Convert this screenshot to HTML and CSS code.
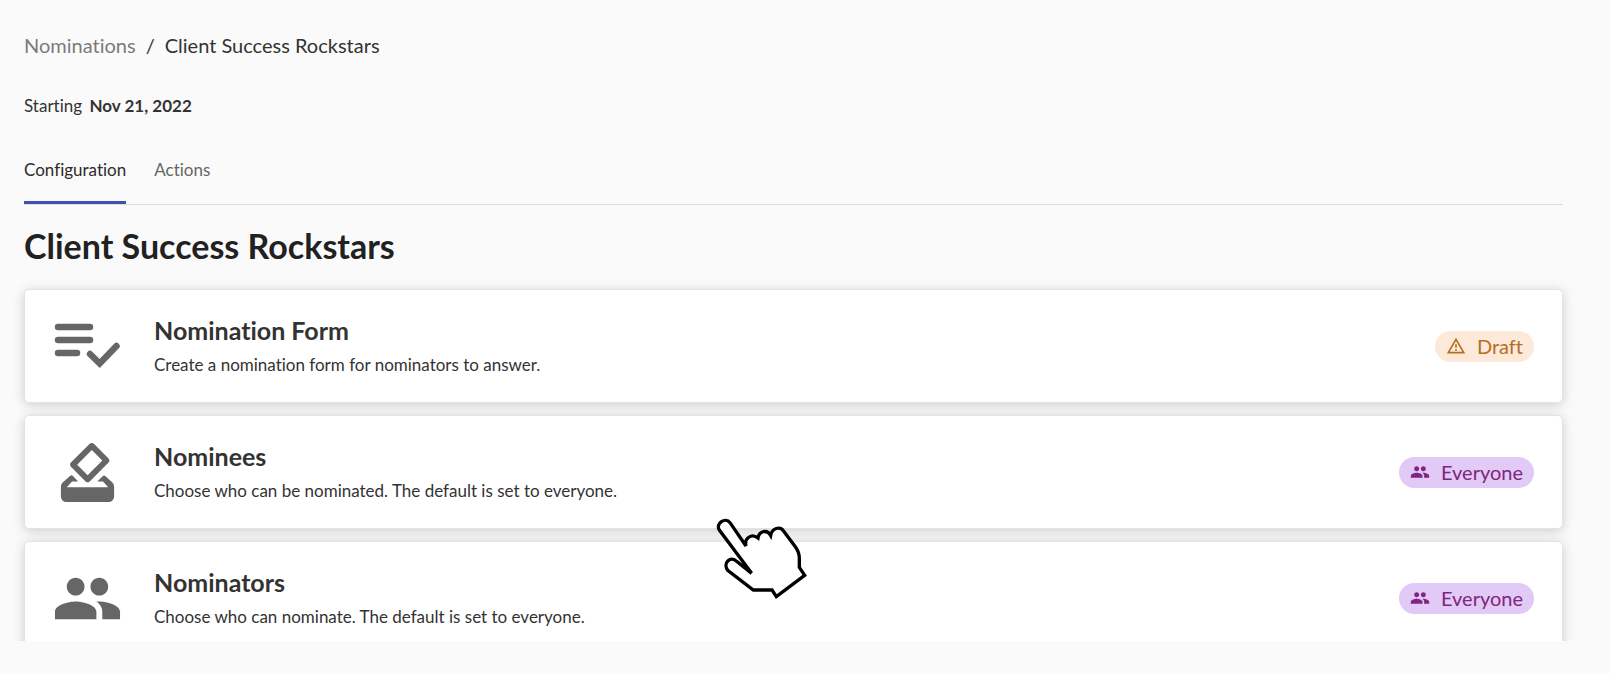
FILE: index.html
```
<!DOCTYPE html>
<html lang="en">
<head>
  <meta charset="UTF-8" />
  <meta name="viewport" content="width=device-width, initial-scale=1.0"/>
  <title>Client Success Rockstars - Nominations</title>
  <link rel="stylesheet" href="styles.css">
</head>
<body>

  <!-- shared icons -->
  <svg class="sprite" aria-hidden="true">
    <symbol id="icon-people" viewBox="0 0 24 24">
      <path d="M16 11c1.66 0 2.99-1.34 2.99-3S17.66 5 16 5c-1.66 0-3 1.34-3 3s1.34 3 3 3zm-8 0c1.66 0 2.99-1.34 2.99-3S9.66 5 8 5C6.34 5 5 6.34 5 8s1.34 3 3 3zm0 2c-2.33 0-7 1.17-7 3.5V19h14v-2.5c0-2.33-4.67-3.5-7-3.5zm8 0c-.29 0-.62.02-.97.05 1.16.84 1.97 1.97 1.97 3.45V19h6v-2.5c0-2.33-4.67-3.5-7-3.5z"/>
    </symbol>
  </svg>

  <div class="page">
    <header>
      <nav class="breadcrumb" aria-label="Breadcrumb">
        <a href="#nominations">Nominations</a>
        <span>/</span>
        <span>Client Success Rockstars</span>
      </nav>
      <p class="starting">Starting <strong>Nov 21, 2022</strong></p>
      <nav class="tabs">
        <a href="#configuration" class="active">Configuration</a>
        <a href="#actions">Actions</a>
      </nav>
    </header>

    <main>
      <h1>Client Success Rockstars</h1>

      <div class="card-list">
        <a class="card" href="#nomination-form">
          <svg class="card-icon" viewBox="0 0 71 71" aria-hidden="true">
            <path class="line" d="M6 16h32M6 29h32M6 42h19M38 43l9.7 9.5L64.5 35"/>
          </svg>
          <div class="card-text">
            <h2>Nomination Form</h2>
            <p>Create a nomination form for nominators to answer.</p>
          </div>
          <span class="badge badge-draft">
            <svg viewBox="0 0 24 24" aria-hidden="true">
              <path d="M12 5.99L19.53 19H4.47L12 5.99M12 2L1 21h22L12 2zm1 14h-2v2h2v-2zm0-6h-2v4h2v-4z"/>
            </svg>
            Draft
          </span>
        </a>

        <a class="card" href="#nominees">
          <svg class="card-icon" viewBox="0 0 24 24" aria-hidden="true">
            <path d="M17.3 13.1L15.3 15h1.93L19 17H5l1.78-2h2.05L7.1 13.2q-.5-.5-1 0L3.6 15.4q-.6.6-.6 1.4V20c0 1.1.89 2 1.99 2H19c1.1 0 2-.89 2-2v-3.2q0-.8-.6-1.4L18 13.2q-.35-.35-.7-.1zM17 7.95l-4.95 4.95-3.54-3.54 4.95-4.95L17 7.95zm-4.24-5.66L6.39 8.66c-.39.39-.39 1.02 0 1.41l4.95 4.95c.39.39 1.02.39 1.41 0l6.36-6.36c.39-.39.39-1.02 0-1.41L14.16 2.3c-.38-.4-1.01-.4-1.4-.01z"/>
          </svg>
          <div class="card-text">
            <h2>Nominees</h2>
            <p>Choose who can be nominated. The default is set to everyone.</p>
          </div>
          <span class="badge badge-everyone">
            <svg aria-hidden="true"><use href="#icon-people"/></svg>
            Everyone
          </span>
        </a>

        <a class="card" href="#nominators">
          <svg class="card-icon" aria-hidden="true"><use href="#icon-people"/></svg>
          <div class="card-text">
            <h2>Nominators</h2>
            <p>Choose who can nominate. The default is set to everyone.</p>
          </div>
          <span class="badge badge-everyone">
            <svg aria-hidden="true"><use href="#icon-people"/></svg>
            Everyone
          </span>
        </a>
      </div>
    </main>
  </div>

  <!-- hand pointer -->
  <svg class="pointer" viewBox="42 36 288 258" aria-hidden="true">
    <path d="M155 208L58 78C46 58 76 38 90 56L138 126C132 104 154 86 174 102C178 80 202 76 212 94C216 72 240 66 250 80L286 128Q299 146 298 166V190L314 214L229 278L216 258H160L84 200C66 178 92 154 110 172L155 208"/>
  </svg>

</body>
</html>
```

FILE: styles.css
```
* {
  margin: 0;
  padding: 0;
  box-sizing: border-box;
}

body {
  font-family: Lato, sans-serif;
  font-variant-ligatures: none;
  background-color: #fafafa;
  color: #333;
  line-height: 24px;
}

a {
  color: inherit;
  text-decoration: none;
}

.sprite {
  display: none;
}

.page {
  height: calc(100vh - 33px);
  margin: 0 34px 0 10px;
  padding: 33px 13px 0 14px;
  overflow: hidden;
}

.breadcrumb {
  display: flex;
  gap: 10px;
  font-size: 20px;
}

.breadcrumb a {
  color: #7a7a7a;
}

.starting {
  margin-top: 37px;
  font-size: 17px;
}

.starting strong {
  margin-left: 3px;
}

.tabs {
  display: flex;
  gap: 28px;
  margin-top: 40px;
  border-bottom: 1px solid #ddd;
  font-size: 17px;
}

.tabs a {
  padding-bottom: 19px;
  border-bottom: 3px solid transparent;
  color: #666;
}

.tabs .active {
  border-bottom-color: #3f51b5;
  color: #2b2b2b;
}

h1 {
  margin: 21px 0 23px;
  font-size: 34px;
  line-height: 40px;
  color: #212121;
}

.card-list {
  display: flex;
  flex-direction: column;
  gap: 12px;
}

.card {
  display: flex;
  align-items: center;
  min-height: 114px;
  padding: 0 28px 0 27px;
  background-color: #fff;
  border: 1px solid #e4e4e4;
  border-radius: 5px;
  box-shadow: 0 2px 12px rgba(0,0,0,0.18);
}

.card-icon {
  width: 71px;
  height: 71px;
  margin-right: 31px;
  fill: #666;
}

.card-icon .line {
  fill: none;
  stroke: #666;
  stroke-width: 6.5;
  stroke-linecap: round;
}

.card-text {
  flex: 1;
  padding-bottom: 2px;
}

.card h2 {
  font-size: 25px;
  line-height: 32px;
}

.card p {
  margin-top: 7px;
  font-size: 17px;
}

.badge {
  display: flex;
  align-items: center;
  gap: 11px;
  height: 31px;
  padding: 0 11px;
  border-radius: 16px;
  font-size: 20px;
}

.badge svg {
  width: 20px;
  height: 20px;
  fill: currentColor;
}

.badge-draft {
  background-color: #fce9d9;
  color: #b3701f;
}

.badge-everyone {
  background-color: #e1caf5;
  color: #812580;
}

.pointer {
  position: absolute;
  left: 714px;
  top: 516px;
  width: 96px;
  height: 86px;
  fill: #fff;
  stroke: #000;
  stroke-width: 10;
}
```
